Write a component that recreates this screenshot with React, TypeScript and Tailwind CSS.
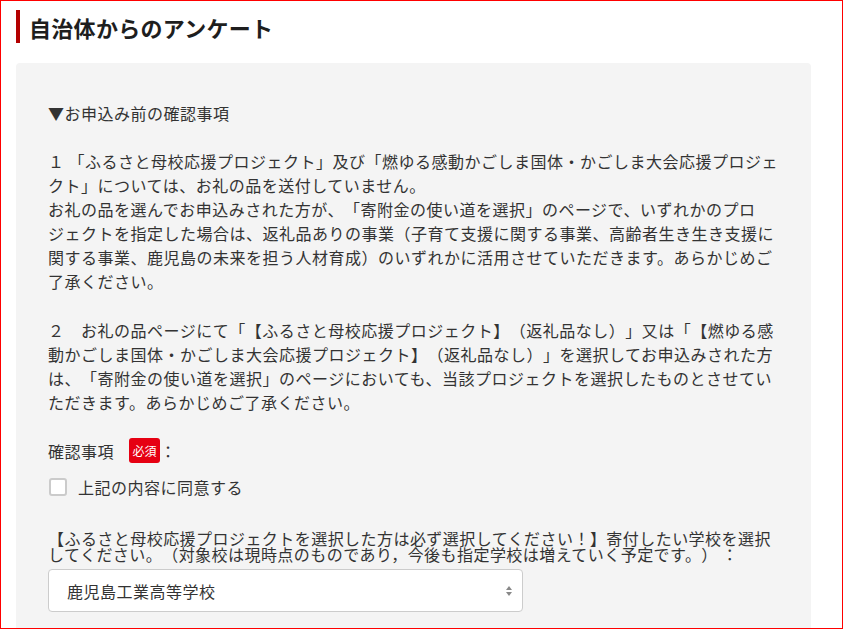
export default function App() {
  const body = "text-[16px] leading-[24px] tracking-[0.5px] whitespace-nowrap";

  return (
    <div
      className="h-[629px] w-[843px] overflow-hidden border border-[#ff0000] bg-white text-[#333] [text-spacing-trim:space-all]"
      style={{ fontFamily: '"Noto Sans CJK JP", "Noto Sans", sans-serif' }}
    >
      {/* Title */}
      <div className="mt-[9px] ml-[15px] flex h-[33px] items-center border-l-4 border-[#b30000] pl-[9px]">
        <h1 className="text-[22px] font-bold leading-none tracking-[0.3px] text-[#1e1e1e]">自治体からのアンケート</h1>
      </div>

      {/* Panel */}
      <div className="mt-[20px] ml-[15px] w-[795px] rounded-[4px] bg-[#f4f4f4] px-[32px] pt-[38px] pb-10">
        <p className={body}>▼お申込み前の確認事項</p>

        <p className={`mt-[24px] ${body}`}>
          １ 「ふるさと母校応援プロジェクト」及び「燃ゆる感動かごしま国体・かごしま大会応援プロジェ
          <br />
          クト」については、お礼の品を送付していません。
          <br />
          お礼の品を選んでお申込みされた方が、「寄附金の使い道を選択」のページで、いずれかのプロ
          <br />
          ジェクトを指定した場合は、返礼品ありの事業（子育て支援に関する事業、高齢者生き生き支援に
          <br />
          関する事業、鹿児島の未来を担う人材育成）のいずれかに活用させていただきます。あらかじめご
          <br />
          了承ください。
        </p>

        <p className={`mt-[25px] ${body}`}>
          ２　お礼の品ページにて「【ふるさと母校応援プロジェクト】（返礼品なし）」又は「【燃ゆる感
          <br />
          動かごしま国体・かごしま大会応援プロジェクト】（返礼品なし）」を選択してお申込みされた方
          <br />
          は、「寄附金の使い道を選択」のページにおいても、当該プロジェクトを選択したものとさせてい
          <br />
          ただきます。あらかじめご了承ください。
        </p>

        {/* Agreement */}
        <div className="mt-[24px] flex h-[25px] items-center">
          <span className="text-[16px] tracking-[0.5px]">確認事項</span>
          <span className="ml-[15px] flex h-[25px] w-[31px] items-center justify-center rounded-[3px] bg-[#e60012] text-[12px] text-white">
            必須
          </span>
          <span className="text-[16px]">：</span>
        </div>

        <label className="mt-[12px] flex h-[24px] items-center">
          <span className="ml-[1px] h-[18px] w-[18px] rounded-[3px] border-2 border-[#cbcbcb] bg-white" />
          <span className="ml-[11px] text-[16px] tracking-[0.5px]">上記の内容に同意する</span>
        </label>

        {/* School select */}
        <p className="mt-[31px] text-[16px] leading-[16px] tracking-[0.45px] whitespace-nowrap">
          【ふるさと母校応援プロジェクトを選択した方は必ず選択してください！】寄付したい学校を選択
          <br />
          してください。（対象校は現時点のものであり，今後も指定学校は増えていく予定です。） ：
        </p>

        <div className="mt-[7px] flex h-[43px] w-[475px] items-center justify-between rounded-[4px] border border-[#cccccc] bg-white pl-[18px] pr-[9px]">
          <span className="text-[16px] tracking-[0.5px]">鹿児島工業高等学校</span>
          <svg width="8" height="14" viewBox="0 0 8 14" className="text-[#888]">
            <path d="M4 2 L7 6 L1 6 Z" fill="currentColor" />
            <path d="M4 12 L7 8 L1 8 Z" fill="currentColor" />
          </svg>
        </div>
      </div>
    </div>
  );
}
